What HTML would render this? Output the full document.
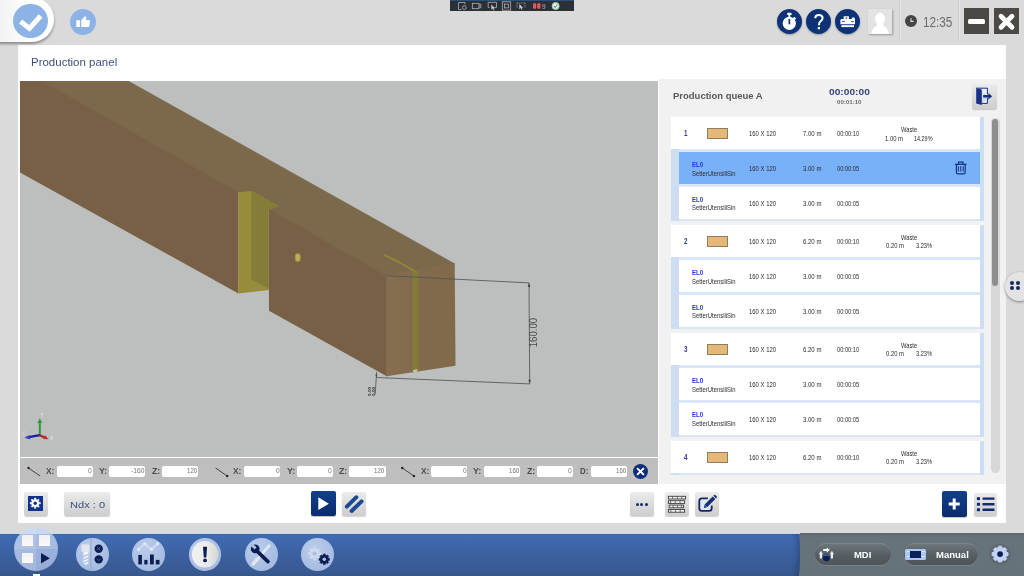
<!DOCTYPE html><html><head><meta charset="utf-8"><title>Production panel</title><style>
html,body{margin:0;padding:0}
html{background:#dadada;overflow:hidden}
body{width:1024px;height:576px;overflow:hidden;background:#dadada;font-family:"Liberation Sans",sans-serif;position:relative}
#clip{position:absolute;left:0;top:0;width:1024px;height:576px;overflow:hidden}
#w{position:absolute;left:0;top:0;width:1024px;height:576px;will-change:transform;filter:blur(.45px)}
.a{position:absolute}
.t{position:absolute;white-space:pre;line-height:1;transform-origin:0 50%;display:block}
.btn{position:absolute;background:linear-gradient(#ebebeb,#cdcdcd);border-radius:2px;box-shadow:0 1px 1px rgba(0,0,0,.18)}
.nbtn{position:absolute;background:linear-gradient(#11408a,#0b2c6c);border-radius:2px;box-shadow:0 1px 1px rgba(0,0,0,.25)}
.inp{position:absolute;top:465.7px;height:11px;width:36.3px;background:#fff;border-radius:2px}
.row{position:absolute;background:#fff}
.circ{position:absolute;border-radius:50%}
svg{position:absolute;overflow:visible}
</style></head><body><div id="clip"><div id="w"><div class="a" style="left:18.2px;top:44.7px;width:988px;height:478.1px;background:#fff"></div>
<div class="a" style="left:-30px;top:-3px;width:83.6px;height:45.2px;border-radius:23px;background:linear-gradient(90deg,#f2f2f2 30px,#fff 60px);box-shadow:0 2px 3px rgba(0,0,0,.38)"></div>
<div class="circ" style="left:13.4px;top:3.6px;width:34.8px;height:34.8px;background:#8db3e6"></div>
<svg style="left:14px;top:4px" width="34" height="34" viewBox="14 4 34 34"><path d="M20.6 21.6 L29.4 28.4 L40.6 16" fill="none" stroke="#fff" stroke-width="5"/></svg>
<div class="circ" style="left:69.9px;top:8.8px;width:26.4px;height:26.4px;background:#8db3e6"></div>
<svg style="left:70px;top:8px" width="26" height="26" viewBox="70 8 26 26"><rect x="76.3" y="20.2" width="3.6" height="6.8" fill="#fff"/><path d="M81.2 27 V20.3 L84.6 16.4 Q86.6 16 86.3 18.2 L85.8 20 H89.2 Q90.2 20.2 90 21.2 L89.2 26.2 Q89 27 88.2 27 Z" fill="#fff"/></svg>
<div class="a" style="left:449.6px;top:-10px;width:124.4px;height:21.3px;background:#2b2f36;border-top:11px solid #28507f;box-sizing:border-box"></div><svg style="left:449px;top:0" width="126" height="12" viewBox="449 0 126 12" fill="none" stroke="#b9b9b9" stroke-width="0.75"><path d="M458.5 2.5h6.5M458.5 2.5v7h3M465 2.5v2"/><circle cx="464.3" cy="7.6" r="1.9"/><rect x="472.3" y="3.3" width="6.6" height="5.4"/><path d="M479 5l1.8-.9v3.8L479 7"/><path d="M489.5 7.5h-1.3v-5.2h8.3v5.2h-1.8"/><path d="M491.3 4.5v5.3l1.4-1.3 1 2 .8-.4-1-1.9h1.7z" fill="#c8c8c8" stroke="none"/><rect x="502.3" y="1.8" width="8.4" height="8.4"/><rect x="504.6" y="4.1" width="3.8" height="3.8"/><path d="M517 3h8M517 3v5M525 3v5" stroke-dasharray="1.2 1"/><path d="M519.3 4v5.3l1.4-1.3 1 2 .8-.4-1-1.9h1.7z" fill="#c8c8c8" stroke="none"/><rect x="533" y="3.2" width="3.2" height="5.6" rx="1" fill="#e25a5a" stroke="none"/><rect x="537.2" y="3.2" width="3.2" height="5.6" rx="1" fill="#e25a5a" stroke="none"/><circle cx="555.6" cy="6" r="3.6" fill="#dfeee0" stroke="#8fc79a" stroke-width="0.8"/><path d="M553.8 6l1.3 1.5 2.3-3" stroke="#3d9a57" stroke-width="1"/></svg><span class="t" style="left:541.60px;top:4px;font-size:6.5px;color:#b8b8b8;transform:scaleX(0.9931);">9</span><div class="circ" style="left:776.8px;top:8.8px;width:25px;height:25px;background:#0e3278;box-shadow:0 1px 2px rgba(0,0,0,.3)"></div><div class="circ" style="left:806.4px;top:8.8px;width:25px;height:25px;background:#0e3278;box-shadow:0 1px 2px rgba(0,0,0,.3)"></div><div class="circ" style="left:834.8px;top:8.8px;width:25px;height:25px;background:#0e3278;box-shadow:0 1px 2px rgba(0,0,0,.3)"></div><svg style="left:770px;top:0" width="100" height="42" viewBox="770 0 100 42"><circle cx="789.3" cy="23.3" r="6.6" fill="#fff"/><rect x="787.2" y="12.8" width="4.4" height="2.3" rx=".6" fill="#fff"/><rect x="788.4" y="14.5" width="1.9" height="3" fill="#fff"/><path d="M793.6 17.6l1.9 1.7" stroke="#fff" stroke-width="2"/><rect x="788.5" y="19" width="1.7" height="5.3" fill="#0e3278"/><path d="M815.2 18.2 Q815.3 14.9 818.9 14.9 Q822.6 14.9 822.6 18 Q822.6 19.8 820.6 21.3 Q818.9 22.6 818.9 25.2" fill="none" stroke="#fff" stroke-width="2"/><rect x="817.8" y="27" width="2.2" height="2.3" fill="#fff"/><path d="M840.4 24.2 V20.2 Q840.4 19 841.6 19 H843.7 V16.2 H848.9 V19 H851.8 V17.6 H854.4 L855 19.6 V24.2 Z" fill="#fff"/><rect x="841.4" y="25.2" width="12.6" height="1.9" fill="#fff"/><path d="M842 21.6h3M851 21.6h3" stroke="#0e3278" stroke-width=".8"/><rect x="845.6" y="17.4" width="1.6" height="1.2" fill="#0e3278"/></svg><div class="a" style="left:867.8px;top:9px;width:24.6px;height:24.8px;background:#e3e3e3;box-shadow:1px 1px 2px rgba(0,0,0,.3)"></div><svg style="left:868px;top:9px" width="25" height="25" viewBox="868 9 25 25"><ellipse cx="880.1" cy="18.6" rx="5.1" ry="5.6" fill="#fff"/><path d="M871.2 33.8 Q872.4 27.4 877.2 25.6 L876.4 21 H883.8 L883 25.6 Q887.8 27.4 889 33.8 Z" fill="#fff"/></svg><div class="a" style="left:899px;top:0;width:1px;height:40px;background:#cdcdcd"></div><div class="a" style="left:900px;top:0;width:1px;height:40px;background:#e6e6e6"></div><div class="a" style="left:958px;top:0;width:1px;height:40px;background:#cdcdcd"></div><div class="a" style="left:959px;top:0;width:1px;height:40px;background:#e6e6e6"></div><div class="circ" style="left:905px;top:15px;width:12px;height:12px;background:#444"></div><svg style="left:905px;top:15px" width="12" height="12" viewBox="0 0 12 12"><path d="M6 3.2V6.4H8.6" fill="none" stroke="#ddd" stroke-width="1.1"/></svg><span class="t" style="left:923.00px;top:15px;font-size:14px;color:#6a6a6a;transform:scaleX(0.8389);">12:35</span><div class="a" style="left:964px;top:8.4px;width:24.8px;height:25.3px;background:#4b4946"></div><div class="a" style="left:968.2px;top:19.2px;width:16.6px;height:4.6px;border-radius:1.5px;background:#fff"></div><div class="a" style="left:994px;top:8.4px;width:24.8px;height:25.3px;background:#4b4946"></div><svg style="left:994px;top:8.6px" width="25" height="25" viewBox="0 0 25 25"><path d="M7 7.2L18 18.2M18 7.2L7 18.2" stroke="#fff" stroke-width="4.8" stroke-linecap="round"/></svg><span class="t" style="left:31.00px;top:58px;font-size:10.4px;color:#3b4f80;transform:scale(1.1051,0.9890);">Production panel</span><div class="a" style="left:20px;top:80.5px;width:637.5px;height:376px;background:#bdbfbe"></div><svg style="left:20px;top:80.5px;overflow:hidden" width="637.5" height="376" viewBox="20 80.5 637.5 376"><defs><linearGradient id="ge" x1="0" x2="1" y1="0" y2="0"><stop offset="0" stop-color="#866f50"/><stop offset=".3" stop-color="#836c4d"/><stop offset=".5" stop-color="#826b4c"/><stop offset="1" stop-color="#816a4a"/></linearGradient><linearGradient id="gf" x1="0" x2="1" y1="0" y2="0"><stop offset="0" stop-color="#775f46"/><stop offset="1" stop-color="#7b6348"/></linearGradient></defs><polygon points="42,80.5 128,80.5 454.7,263.4 386.4,275.2" fill="#7c684b" stroke="#7c684b" stroke-width=".8"/><polygon points="20,80.5 42,80.5 238.4,191.7 238.4,293 20,172" fill="#786046"/><path d="M42,80.5L238.4,191.7" stroke="#7b644a" stroke-width="1.2"/><polygon points="238.4,191.7 251.4,190.6 279,205.6 268.4,209 268.8,289.6 238.4,293" fill="#968c3b"/><polygon points="251.4,190.6 279,205.6 268.4,209 268.6,288.2 251.4,279" fill="#857d37"/><polygon points="268.6,208.6 386.4,275.2 386.7,375.8 269,310.2" fill="#786046"/><path d="M268.6,208.6L386.4,275.2" stroke="#7b644a" stroke-width="1.2"/><polygon points="386.4,275.2 454.7,263.4 455.5,365.2 386.7,375.8" fill="url(#ge)"/><path d="M386.4,275.2L454.7,263.4" stroke="#826c4d" stroke-width="1.2"/><path d="M386.5,275.2L386.7,375.8" stroke="#816a4b" stroke-width="1"/><polygon points="412.4,270.8 418.4,269.7 418.4,370.9 412.4,371.9" fill="#837c38"/><polygon points="413.2,371.8 417.4,371.1 417.4,368.8 413.2,369.6" fill="#c9c9a6"/><path d="M384,254.4 L398.7,261.5 L410.4,268.2 L415.6,271.4" fill="none" stroke="#8f8639" stroke-width="2" stroke-linejoin="round"/><ellipse cx="297.8" cy="257.2" rx="3.1" ry="4.6" fill="#9c8e40"/><ellipse cx="297.7" cy="257" rx="2.1" ry="3.5" fill="#bfae58"/><g stroke="#4c5757" stroke-width="0.85" fill="none"><path d="M386.4,275.2 L529,282.4"/><path d="M376.4,377 L529.7,383.4"/><path d="M529,282.4 L529.7,383.4"/><path d="M376.6,371.6 L375.2,394"/></g><path d="M529,282.4l-1.3,4.2h2.6z M529.7,383.4l-1.4,-4.2h2.6z M376.45,377l-1.2,-3h2.3z" fill="#3f4a4a"/><g transform="translate(536.8,346.8) rotate(-90)"><text x="0" y="0" font-family="Liberation Sans, sans-serif" font-size="10.4" fill="#4a4a4a" textLength="29.4" lengthAdjust="spacingAndGlyphs">160.00</text></g><g transform="translate(374.6,395.4) rotate(-90)"><text x="0" y="0" font-family="Liberation Sans, sans-serif" font-size="4.2" font-weight="bold" fill="#222" textLength="9" lengthAdjust="spacingAndGlyphs">0.00</text><text x="0" y="-3.8" font-family="Liberation Sans, sans-serif" font-size="4.2" font-weight="bold" fill="#222" textLength="9" lengthAdjust="spacingAndGlyphs">0.00</text></g><path d="M39.8,434.7 L39.8,422" stroke="#2e9a3a" stroke-width="2"/><path d="M39.8,417.6l-2.3,5h4.6z" fill="#2e9a3a"/><path d="M39.8,434.7 L29,436.6" stroke="#1c1c9c" stroke-width="2.2"/><path d="M24.4,437.3l5.2,-2.8 .6,4.4z" fill="#3a3ad0"/><path d="M39.8,434.7 L45,437.2" stroke="#b02222" stroke-width="2.2"/><path d="M48.4,438.8l-5.2,-.2 2,-3.8z" fill="#c42a2a"/><text x="40.4" y="416" font-family="Liberation Sans, sans-serif" font-size="5" fill="#e8e8e8">Y</text><text x="50" y="439" font-family="Liberation Sans, sans-serif" font-size="5" fill="#e8e8e8">X</text><text x="22.5" y="434.5" font-family="Liberation Sans, sans-serif" font-size="4.5" fill="#d8d8b8">Z</text></svg><div class="a" style="left:20px;top:458.3px;width:637.5px;height:25.3px;background:#bebebe"></div><svg style="left:0;top:458px" width="660" height="26" viewBox="0 458 660 26"><path d="M28.5 468.0L40.1 476.0" stroke="#333" stroke-width=".9"/><circle cx="28.5" cy="468.0" r="1.2" fill="#222"/><path d="M215.6 468.0L227.2 476.0" stroke="#333" stroke-width=".9"/><circle cx="227.2" cy="476.0" r="1.2" fill="#222"/><path d="M402.3 468.0L413.9 476.0" stroke="#333" stroke-width=".9"/><circle cx="402.3" cy="468.0" r="1.2" fill="#222"/><circle cx="413.9" cy="476.0" r="1.2" fill="#222"/></svg><span class="t" style="left:45.90px;top:467px;font-size:8.4px;font-weight:700;color:#4c4c4c;transform:scaleX(0.9910);">X:</span><div class="inp" style="left:56.6px"></div><span class="t" style="left:88.10px;top:467px;font-size:7px;color:#747474;transform:scaleX(0.9472);">0</span><span class="t" style="left:99.00px;top:467px;font-size:8.4px;font-weight:700;color:#4c4c4c;transform:scaleX(1.0688);">Y:</span><div class="inp" style="left:109.2px"></div><span class="t" style="left:131.00px;top:467px;font-size:7px;color:#747474;transform:scaleX(0.9561);">-160</span><span class="t" style="left:151.70px;top:467px;font-size:8.4px;font-weight:700;color:#4c4c4c;transform:scaleX(1.0498);">Z:</span><div class="inp" style="left:162.0px"></div><span class="t" style="left:186.90px;top:467px;font-size:7px;color:#747474;transform:scaleX(0.8813);">120</span><span class="t" style="left:233.20px;top:467px;font-size:8.4px;font-weight:700;color:#4c4c4c;transform:scaleX(0.9910);">X:</span><div class="inp" style="left:244.0px"></div><span class="t" style="left:275.50px;top:467px;font-size:7px;color:#747474;transform:scaleX(0.9472);">0</span><span class="t" style="left:286.50px;top:467px;font-size:8.4px;font-weight:700;color:#4c4c4c;transform:scaleX(1.0688);">Y:</span><div class="inp" style="left:296.7px"></div><span class="t" style="left:328.20px;top:467px;font-size:7px;color:#747474;transform:scaleX(0.9472);">0</span><span class="t" style="left:339.00px;top:467px;font-size:8.4px;font-weight:700;color:#4c4c4c;transform:scaleX(1.0498);">Z:</span><div class="inp" style="left:349.4px"></div><span class="t" style="left:374.30px;top:467px;font-size:7px;color:#747474;transform:scaleX(0.8813);">120</span><span class="t" style="left:420.60px;top:467px;font-size:8.4px;font-weight:700;color:#4c4c4c;transform:scaleX(0.9910);">X:</span><div class="inp" style="left:431.0px"></div><span class="t" style="left:462.50px;top:467px;font-size:7px;color:#747474;transform:scaleX(0.9472);">0</span><span class="t" style="left:473.40px;top:467px;font-size:8.4px;font-weight:700;color:#4c4c4c;transform:scaleX(1.0688);">Y:</span><div class="inp" style="left:483.8px"></div><span class="t" style="left:508.70px;top:467px;font-size:7px;color:#747474;transform:scaleX(0.8813);">160</span><span class="t" style="left:526.70px;top:467px;font-size:8.4px;font-weight:700;color:#4c4c4c;transform:scaleX(1.0498);">Z:</span><div class="inp" style="left:536.8px"></div><span class="t" style="left:568.30px;top:467px;font-size:7px;color:#747474;transform:scaleX(0.9472);">0</span><span class="t" style="left:579.50px;top:467px;font-size:8.4px;font-weight:700;color:#4c4c4c;transform:scaleX(0.9385);">D:</span><div class="inp" style="left:591.0px"></div><span class="t" style="left:615.90px;top:467px;font-size:7px;color:#747474;transform:scaleX(0.8813);">160</span><div class="circ" style="left:633.2px;top:463.6px;width:15px;height:15px;background:#0c2f78"></div><svg style="left:633.2px;top:463.6px" width="15" height="15" viewBox="0 0 15 15"><path d="M4.1 4.1L10.9 10.9M10.9 4.1L4.1 10.9" stroke="#fff" stroke-width="2"/></svg><div class="a" style="left:658.8px;top:79.4px;width:347.4px;height:404.6px;background:#f1f1f1"></div><span class="t" style="left:672.50px;top:91px;font-size:9.6px;font-weight:700;color:#585858;transform:scale(0.9879,0.9821);">Production queue A</span><span class="t" style="left:828.70px;top:87px;font-size:9.6px;font-weight:700;color:#35457f;transform:scale(1.0623,1.0119);">00:00:00</span><span class="t" style="left:836.70px;top:99px;font-size:6.2px;font-weight:700;color:#6c6c6c;transform:scale(0.9887,0.9908);">00:01:10</span><div class="btn" style="left:972px;top:84px;width:25px;height:24.5px"></div><svg style="left:972px;top:84px" width="25" height="25" viewBox="972 84 25 25"><path d="M976.2 88.2H987.4V94.4M987.4 98V103.4H981.6" fill="#e8f0fb" stroke="#18307a" stroke-width="1"/><path d="M976.2 88.2L981.8 89.6V105L976.2 103.4Z" fill="#13308a"/><path d="M983.2 95H988.4V93L992.2 96.2L988.4 99.4V97.4H983.2Z" fill="#13308a"/></svg><div class="a" style="left:660px;top:112px;width:330px;height:362.6px;overflow:hidden"><div class="a" style="left:10.6px;top:37.2px;width:8.3px;height:71.6px;background:#cddef3"></div><div class="a" style="left:319.8px;top:5.4px;width:4.2px;height:103.4px;background:#cddef3"></div><div class="a" style="left:18.9px;top:37.2px;width:301px;height:71.6px;background:#d8e6f7"></div><div class="row" style="left:10.6px;top:5.4px;width:309.2px;height:31.5px"></div><div class="a" style="left:47.1px;top:15.8px;width:18.8px;height:9px;background:#e6b877;border:1px solid #8f7d62"></div><span class="t" style="left:23.70px;top:18px;font-size:8.2px;font-weight:700;color:#3038b4;transform:scaleX(0.7671);">1</span><span class="t" style="left:88.70px;top:18px;font-size:7.6px;color:#2a2a2a;transform:scaleX(0.7827);">160 X 120</span><span class="t" style="left:142.60px;top:18px;font-size:7.6px;color:#2a2a2a;transform:scaleX(0.7925);">7.00 m</span><span class="t" style="left:177.00px;top:18px;font-size:7.6px;color:#2a2a2a;transform:scaleX(0.7510);">00:00:10</span><span class="t" style="left:240.80px;top:14px;font-size:7.4px;color:#2a2a2a;transform:scaleX(0.7837);">Waste</span><span class="t" style="left:225.00px;top:23px;font-size:7.6px;color:#2a2a2a;transform:scaleX(0.7752);">1.00 m</span><span class="t" style="left:254.30px;top:23px;font-size:7.6px;color:#2a2a2a;transform:scaleX(0.7180);">14.29%</span><div class="row" style="left:18.9px;top:39.9px;width:300.9px;height:32px;background:#78b1f9"></div><span class="t" style="left:32.00px;top:49px;font-size:7.8px;font-weight:700;color:#2a32dc;transform:scaleX(0.7825);">EL0</span><span class="t" style="left:32.00px;top:58px;font-size:7px;color:#2e2e2e;transform:scaleX(0.8425);">SetterUtensiliSin</span><span class="t" style="left:88.70px;top:53px;font-size:7.6px;color:#2a2a2a;transform:scaleX(0.7827);">160 X 120</span><span class="t" style="left:142.60px;top:53px;font-size:7.6px;color:#2a2a2a;transform:scaleX(0.7925);">3.00 m</span><span class="t" style="left:177.00px;top:53px;font-size:7.6px;color:#2a2a2a;transform:scaleX(0.7510);">00:00:05</span><svg style="left:294px;top:48.0px" width="14" height="16" viewBox="954 160 14 16" fill="none" stroke="#14337e" stroke-width="1.2"><path d="M955 164.4H966.6M958.5 164.2V162.2H963V164.2M956.4 164.6V172.6Q956.4 173.8 957.6 173.8H964Q965.2 173.8 965.2 172.6V164.6"/><path d="M958.4 166.2V171.6M960.8 166.2V171.6M963.2 166.2V171.6" stroke-width="1"/></svg><div class="row" style="left:18.9px;top:74.6px;width:300.9px;height:32px;background:#fff"></div><span class="t" style="left:32.00px;top:84px;font-size:7.8px;font-weight:700;color:#2a32dc;transform:scaleX(0.7825);">EL0</span><span class="t" style="left:32.00px;top:92px;font-size:7px;color:#2e2e2e;transform:scaleX(0.8425);">SetterUtensiliSin</span><span class="t" style="left:88.70px;top:88px;font-size:7.6px;color:#2a2a2a;transform:scaleX(0.7827);">160 X 120</span><span class="t" style="left:142.60px;top:88px;font-size:7.6px;color:#2a2a2a;transform:scaleX(0.7925);">3.00 m</span><span class="t" style="left:177.00px;top:88px;font-size:7.6px;color:#2a2a2a;transform:scaleX(0.7510);">00:00:05</span><div class="a" style="left:10.6px;top:145.2px;width:8.3px;height:71.6px;background:#cddef3"></div><div class="a" style="left:319.8px;top:113.4px;width:4.2px;height:103.4px;background:#cddef3"></div><div class="a" style="left:18.9px;top:145.2px;width:301px;height:71.6px;background:#d8e6f7"></div><div class="row" style="left:10.6px;top:113.4px;width:309.2px;height:31.5px"></div><div class="a" style="left:47.1px;top:123.8px;width:18.8px;height:9px;background:#e6b877;border:1px solid #8f7d62"></div><span class="t" style="left:23.70px;top:126px;font-size:8.2px;font-weight:700;color:#3038b4;transform:scaleX(0.7671);">2</span><span class="t" style="left:88.70px;top:126px;font-size:7.6px;color:#2a2a2a;transform:scaleX(0.7827);">160 X 120</span><span class="t" style="left:142.60px;top:126px;font-size:7.6px;color:#2a2a2a;transform:scaleX(0.7925);">6.20 m</span><span class="t" style="left:177.00px;top:126px;font-size:7.6px;color:#2a2a2a;transform:scaleX(0.7510);">00:00:10</span><span class="t" style="left:240.80px;top:122px;font-size:7.4px;color:#2a2a2a;transform:scaleX(0.7837);">Waste</span><span class="t" style="left:226.00px;top:130px;font-size:7.6px;color:#2a2a2a;transform:scaleX(0.7752);">0.20 m</span><span class="t" style="left:256.00px;top:130px;font-size:7.6px;color:#2a2a2a;transform:scaleX(0.7426);">3.23%</span><div class="row" style="left:18.9px;top:147.9px;width:300.9px;height:32px;background:#fff"></div><span class="t" style="left:32.00px;top:157px;font-size:7.8px;font-weight:700;color:#2a32dc;transform:scaleX(0.7825);">EL0</span><span class="t" style="left:32.00px;top:166px;font-size:7px;color:#2e2e2e;transform:scaleX(0.8425);">SetterUtensiliSin</span><span class="t" style="left:88.70px;top:161px;font-size:7.6px;color:#2a2a2a;transform:scaleX(0.7827);">160 X 120</span><span class="t" style="left:142.60px;top:161px;font-size:7.6px;color:#2a2a2a;transform:scaleX(0.7925);">3.00 m</span><span class="t" style="left:177.00px;top:161px;font-size:7.6px;color:#2a2a2a;transform:scaleX(0.7510);">00:00:05</span><div class="row" style="left:18.9px;top:182.6px;width:300.9px;height:32px;background:#fff"></div><span class="t" style="left:32.00px;top:192px;font-size:7.8px;font-weight:700;color:#2a32dc;transform:scaleX(0.7825);">EL0</span><span class="t" style="left:32.00px;top:200px;font-size:7px;color:#2e2e2e;transform:scaleX(0.8425);">SetterUtensiliSin</span><span class="t" style="left:88.70px;top:196px;font-size:7.6px;color:#2a2a2a;transform:scaleX(0.7827);">160 X 120</span><span class="t" style="left:142.60px;top:196px;font-size:7.6px;color:#2a2a2a;transform:scaleX(0.7925);">3.00 m</span><span class="t" style="left:177.00px;top:196px;font-size:7.6px;color:#2a2a2a;transform:scaleX(0.7510);">00:00:05</span><div class="a" style="left:10.6px;top:253.2px;width:8.3px;height:71.6px;background:#cddef3"></div><div class="a" style="left:319.8px;top:221.4px;width:4.2px;height:103.4px;background:#cddef3"></div><div class="a" style="left:18.9px;top:253.2px;width:301px;height:71.6px;background:#d8e6f7"></div><div class="row" style="left:10.6px;top:221.4px;width:309.2px;height:31.5px"></div><div class="a" style="left:47.1px;top:231.8px;width:18.8px;height:9px;background:#e6b877;border:1px solid #8f7d62"></div><span class="t" style="left:23.70px;top:234px;font-size:8.2px;font-weight:700;color:#3038b4;transform:scaleX(0.7671);">3</span><span class="t" style="left:88.70px;top:234px;font-size:7.6px;color:#2a2a2a;transform:scaleX(0.7827);">160 X 120</span><span class="t" style="left:142.60px;top:234px;font-size:7.6px;color:#2a2a2a;transform:scaleX(0.7925);">6.20 m</span><span class="t" style="left:177.00px;top:234px;font-size:7.6px;color:#2a2a2a;transform:scaleX(0.7510);">00:00:10</span><span class="t" style="left:240.80px;top:230px;font-size:7.4px;color:#2a2a2a;transform:scaleX(0.7837);">Waste</span><span class="t" style="left:226.00px;top:238px;font-size:7.6px;color:#2a2a2a;transform:scaleX(0.7752);">0.20 m</span><span class="t" style="left:256.00px;top:238px;font-size:7.6px;color:#2a2a2a;transform:scaleX(0.7426);">3.23%</span><div class="row" style="left:18.9px;top:255.9px;width:300.9px;height:32px;background:#fff"></div><span class="t" style="left:32.00px;top:265px;font-size:7.8px;font-weight:700;color:#2a32dc;transform:scaleX(0.7825);">EL0</span><span class="t" style="left:32.00px;top:274px;font-size:7px;color:#2e2e2e;transform:scaleX(0.8425);">SetterUtensiliSin</span><span class="t" style="left:88.70px;top:269px;font-size:7.6px;color:#2a2a2a;transform:scaleX(0.7827);">160 X 120</span><span class="t" style="left:142.60px;top:269px;font-size:7.6px;color:#2a2a2a;transform:scaleX(0.7925);">3.00 m</span><span class="t" style="left:177.00px;top:269px;font-size:7.6px;color:#2a2a2a;transform:scaleX(0.7510);">00:00:05</span><div class="row" style="left:18.9px;top:290.6px;width:300.9px;height:32px;background:#fff"></div><span class="t" style="left:32.00px;top:299px;font-size:7.8px;font-weight:700;color:#2a32dc;transform:scaleX(0.7825);">EL0</span><span class="t" style="left:32.00px;top:308px;font-size:7px;color:#2e2e2e;transform:scaleX(0.8425);">SetterUtensiliSin</span><span class="t" style="left:88.70px;top:304px;font-size:7.6px;color:#2a2a2a;transform:scaleX(0.7827);">160 X 120</span><span class="t" style="left:142.60px;top:304px;font-size:7.6px;color:#2a2a2a;transform:scaleX(0.7925);">3.00 m</span><span class="t" style="left:177.00px;top:304px;font-size:7.6px;color:#2a2a2a;transform:scaleX(0.7510);">00:00:05</span><div class="a" style="left:10.6px;top:361.2px;width:8.3px;height:71.6px;background:#cddef3"></div><div class="a" style="left:319.8px;top:329.4px;width:4.2px;height:103.4px;background:#cddef3"></div><div class="a" style="left:18.9px;top:361.2px;width:301px;height:71.6px;background:#d8e6f7"></div><div class="row" style="left:10.6px;top:329.4px;width:309.2px;height:31.5px"></div><div class="a" style="left:47.1px;top:339.8px;width:18.8px;height:9px;background:#e6b877;border:1px solid #8f7d62"></div><span class="t" style="left:23.70px;top:342px;font-size:8.2px;font-weight:700;color:#3038b4;transform:scaleX(0.7671);">4</span><span class="t" style="left:88.70px;top:342px;font-size:7.6px;color:#2a2a2a;transform:scaleX(0.7827);">160 X 120</span><span class="t" style="left:142.60px;top:342px;font-size:7.6px;color:#2a2a2a;transform:scaleX(0.7925);">6.20 m</span><span class="t" style="left:177.00px;top:342px;font-size:7.6px;color:#2a2a2a;transform:scaleX(0.7510);">00:00:10</span><span class="t" style="left:240.80px;top:338px;font-size:7.4px;color:#2a2a2a;transform:scaleX(0.7837);">Waste</span><span class="t" style="left:226.00px;top:346px;font-size:7.6px;color:#2a2a2a;transform:scaleX(0.7752);">0.20 m</span><span class="t" style="left:256.00px;top:346px;font-size:7.6px;color:#2a2a2a;transform:scaleX(0.7426);">3.23%</span><div class="row" style="left:18.9px;top:363.9px;width:300.9px;height:32px;background:#fff"></div><span class="t" style="left:32.00px;top:373px;font-size:7.8px;font-weight:700;color:#2a32dc;transform:scaleX(0.7825);">EL0</span><span class="t" style="left:32.00px;top:382px;font-size:7px;color:#2e2e2e;transform:scaleX(0.8425);">SetterUtensiliSin</span><span class="t" style="left:88.70px;top:377px;font-size:7.6px;color:#2a2a2a;transform:scaleX(0.7827);">160 X 120</span><span class="t" style="left:142.60px;top:377px;font-size:7.6px;color:#2a2a2a;transform:scaleX(0.7925);">3.00 m</span><span class="t" style="left:177.00px;top:377px;font-size:7.6px;color:#2a2a2a;transform:scaleX(0.7510);">00:00:05</span><div class="row" style="left:18.9px;top:398.6px;width:300.9px;height:32px;background:#fff"></div><span class="t" style="left:32.00px;top:407px;font-size:7.8px;font-weight:700;color:#2a32dc;transform:scaleX(0.7825);">EL0</span><span class="t" style="left:32.00px;top:416px;font-size:7px;color:#2e2e2e;transform:scaleX(0.8425);">SetterUtensiliSin</span><span class="t" style="left:88.70px;top:412px;font-size:7.6px;color:#2a2a2a;transform:scaleX(0.7827);">160 X 120</span><span class="t" style="left:142.60px;top:412px;font-size:7.6px;color:#2a2a2a;transform:scaleX(0.7925);">3.00 m</span><span class="t" style="left:177.00px;top:412px;font-size:7.6px;color:#2a2a2a;transform:scaleX(0.7510);">00:00:05</span></div><div class="a" style="left:990.6px;top:117.6px;width:9.4px;height:355.6px;border-radius:4.7px;background:#d7d7d7"></div><div class="a" style="left:992.2px;top:118.6px;width:5.9px;height:167.4px;border-radius:3px;background:#8e8e8e"></div><div class="btn" style="left:23.8px;top:491.8px;width:24.2px;height:24.7px"></div><div class="a" style="left:28.1px;top:496.2px;width:14.8px;height:14.8px;background:#10308a"></div><svg style="left:29.30px;top:497.40px" width="12.40" height="12.40" viewBox="29.30 497.40 12.40 12.40"><path d="M39.04 502.92L40.66 502.96L40.66 504.24L39.04 504.28L38.48 505.62L39.60 506.80L38.70 507.70L37.52 506.58L36.18 507.14L36.14 508.76L34.86 508.76L34.82 507.14L33.48 506.58L32.30 507.70L31.40 506.80L32.52 505.62L31.96 504.28L30.34 504.24L30.34 502.96L31.96 502.92L32.52 501.58L31.40 500.40L32.30 499.50L33.48 500.62L34.82 500.06L34.86 498.44L36.14 498.44L36.18 500.06L37.52 500.62L38.70 499.50L39.60 500.40L38.48 501.58Z" fill="#fff" stroke="#fff" stroke-width="0.62" stroke-linejoin="round"/><circle cx="35.50" cy="503.60" r="3.60" fill="#fff"/><circle cx="35.50" cy="503.60" r="1.70" fill="#10308a"/></svg><div class="btn" style="left:63.8px;top:491.8px;width:45.8px;height:24.7px"></div><span class="t" style="left:69.50px;top:500px;font-size:10px;color:#3b4f80;transform:scale(1.1077,0.9714);">Ndx : 0</span><div class="nbtn" style="left:311.3px;top:491.3px;width:24.7px;height:25px"></div><svg style="left:311.3px;top:491.3px" width="25" height="25" viewBox="311.3 491.3 25 25"><path d="M318.6 497.6L329.2 504L318.6 510.4Z" fill="#fff"/></svg><div class="btn" style="left:341.6px;top:491.8px;width:24.4px;height:24.7px"></div><svg style="left:341.6px;top:491.8px" width="25" height="25" viewBox="341.6 491.8 25 25"><path d="M346.4 506.4L356 497M351.2 510.8L361.2 501.2" stroke="#1b4a94" stroke-width="3.9" stroke-linecap="round"/></svg><div class="btn" style="left:629.5px;top:491.8px;width:24.4px;height:24.7px"></div><div class="circ" style="left:635.8px;top:502.5px;width:3px;height:3px;background:#15296a"></div><div class="circ" style="left:640.4px;top:502.5px;width:3px;height:3px;background:#15296a"></div><div class="circ" style="left:645.0px;top:502.5px;width:3px;height:3px;background:#15296a"></div><div class="btn" style="left:665px;top:491.8px;width:24px;height:24.7px"></div><svg style="left:665px;top:491.8px" width="24" height="25" viewBox="665 491.8 24 25"><rect x="668.4" y="496.1" width="17.2" height="2.7" fill="#f3f3f3" stroke="#3c3c3c" stroke-width=".9"/><path d="M672.6 496.1V498.8" stroke="#555" stroke-width=".8"/><path d="M677.4 496.1V498.8" stroke="#555" stroke-width=".8"/><path d="M681.8 496.1V498.8" stroke="#555" stroke-width=".8"/><rect x="668.4" y="500.5" width="16.2" height="2.7" fill="#f3f3f3" stroke="#3c3c3c" stroke-width=".9"/><path d="M670.6 500.5V503.2" stroke="#555" stroke-width=".8"/><path d="M675.2 500.5V503.2" stroke="#555" stroke-width=".8"/><path d="M680.0 500.5V503.2" stroke="#555" stroke-width=".8"/><rect x="669.2" y="504.9" width="14.4" height="2.7" fill="#f3f3f3" stroke="#3c3c3c" stroke-width=".9"/><path d="M673.0 504.9V507.6" stroke="#555" stroke-width=".8"/><path d="M677.6 504.9V507.6" stroke="#555" stroke-width=".8"/><path d="M681.4 504.9V507.6" stroke="#555" stroke-width=".8"/><rect x="668.4" y="509.3" width="16.2" height="2.7" fill="#f3f3f3" stroke="#3c3c3c" stroke-width=".9"/><path d="M670.8 509.3V512.0" stroke="#555" stroke-width=".8"/><path d="M675.6 509.3V512.0" stroke="#555" stroke-width=".8"/><path d="M680.2 509.3V512.0" stroke="#555" stroke-width=".8"/></svg><div class="btn" style="left:694.5px;top:491.8px;width:24.5px;height:24.7px"></div><svg style="left:694.5px;top:491.8px" width="25" height="25" viewBox="694.5 491.8 25 25"><rect x="698.8" y="498.2" width="12.4" height="12.4" rx="2.6" fill="#e2e9f6"/><path d="M707.4 498.2H701.4Q698.8 498.2 698.8 500.8V508Q698.8 510.6 701.4 510.6H708.6Q711.2 510.6 711.2 508V505.4" fill="none" stroke="#14285e" stroke-width="1.8"/><path d="M703.2 508L704.2 504.2L712.2 496.2L714.9 498.9L706.9 506.9Z" fill="#14306e"/><path d="M712.9 495.5L713.6 494.9Q714.4 494.4 715.1 495L716.1 496Q716.7 496.8 716.1 497.6L715.5 498.2Z" fill="#14306e"/><path d="M704.6 505.2L706 506.6" stroke="#dfe6f4" stroke-width=".7"/></svg><div class="nbtn" style="left:942.3px;top:491.2px;width:24.7px;height:25.4px"></div><svg style="left:942.3px;top:491.2px" width="25" height="26" viewBox="942.3 491.2 25 26"><path d="M949 504.3H960M954.5 498.8V509.8" stroke="#fff" stroke-width="3"/></svg><div class="btn" style="left:973.5px;top:492.6px;width:23.2px;height:23px"></div><svg style="left:973.5px;top:492.6px" width="24" height="23" viewBox="973.5 492.6 24 23"><rect x="976.4" y="496.8" width="3.1" height="2.9" fill="#15296e"/><rect x="982" y="497.1" width="12" height="2.3" rx=".5" fill="#15296e"/><rect x="976.4" y="502.4" width="3.1" height="2.9" fill="#15296e"/><rect x="982" y="502.7" width="12" height="2.3" rx=".5" fill="#15296e"/><rect x="976.4" y="507.9" width="3.1" height="2.9" fill="#15296e"/><rect x="982" y="508.2" width="12" height="2.3" rx=".5" fill="#15296e"/></svg><div class="a" style="left:-20px;top:533px;width:1064px;height:63px;background:linear-gradient(#5e686e,#67737a 5px,#66727a 43px)"></div><div class="a" style="left:-40px;top:575px;width:839px;height:22px;background:#38588c"></div><div class="a" style="left:-40px;top:533px;width:840.4px;height:43px;border-radius:0 1.6px 1.6px 0/0 21px 21px 0;box-shadow:inset -6px 0 6px -4px rgba(0,0,40,.25);background:linear-gradient(#325a9e,#406bb3 2px,#3c62a3 19px,#38588c 43px)"></div><div class="a" style="left:-20px;top:532.5px;width:820px;height:1px;background:#c9dcef"></div><div class="circ" style="left:14px;top:526.8px;width:44.2px;height:44.2px;background:rgba(196,214,244,.77);overflow:hidden"><div class="a" style="left:0;top:0;width:22px;height:22px;background:rgba(255,255,255,.1)"></div><div class="a" style="left:22px;top:22px;width:23px;height:23px;background:rgba(20,40,120,.07)"></div></div><div class="a" style="left:21.9px;top:535.4px;width:10.8px;height:10.6px;background:linear-gradient(#f3efef,#fafafa)"></div><div class="a" style="left:39.2px;top:535.4px;width:10.8px;height:10.6px;background:linear-gradient(#f3efef,#fafafa)"></div><div class="a" style="left:21.9px;top:552.9px;width:10.8px;height:10.6px;background:linear-gradient(#f3efef,#fafafa)"></div><svg style="left:40px;top:552px" width="12" height="13" viewBox="40 552 12 13"><path d="M41 552.9L49.9 558.2L41 563.5Z" fill="#0b1f52"/></svg><div class="a" style="left:32.5px;top:573.8px;width:7.5px;height:12px;background:#fff"></div><div class="circ" style="left:76.1px;top:537.9px;width:32.8px;height:32.8px;background:radial-gradient(circle at 38% 30%,#bbccea,#a4bbe2 75%)"></div><div class="circ" style="left:132.2px;top:537.9px;width:32.8px;height:32.8px;background:radial-gradient(circle at 38% 30%,#bbccea,#a4bbe2 75%)"></div><div class="circ" style="left:188.6px;top:537.9px;width:32.8px;height:32.8px;background:radial-gradient(circle at 38% 30%,#bbccea,#a4bbe2 75%)"></div><div class="circ" style="left:245.1px;top:537.9px;width:32.8px;height:32.8px;background:radial-gradient(circle at 38% 30%,#bbccea,#a4bbe2 75%)"></div><div class="circ" style="left:301.4px;top:537.9px;width:32.8px;height:32.8px;background:radial-gradient(circle at 38% 30%,#bbccea,#a4bbe2 75%)"></div><svg style="left:70px;top:533px" width="270" height="43" viewBox="70 533 270 43"><rect x="92" y="538.2" width="16" height="32" fill="#b4c8ea" opacity=".0"/><path d="M91 538.4V570" stroke="#97acd3" stroke-width="1.3"/><rect x="81.4" y="544.4" width="8" height="7.4" fill="#e3e5ee"/><path d="M83.5 551.8H88.3V563.4L85.9 564.8L83.5 563.4Z" fill="#f2f4f9"/><path d="M83.3 556.6L88.5 554.2M83.3 560L88.5 557.6M83.3 563.2L88.5 560.8" stroke="#a9c0e6" stroke-width="1.2"/><circle cx="98.7" cy="548.7" r="4.2" fill="#0d1f52"/><circle cx="98.7" cy="559.4" r="4.2" fill="#0d1f52"/><path d="M97.1 547.1L100.3 550.3M100.3 547.1L97.1 550.3" stroke="#4a629c" stroke-width=".9"/><path d="M96.9 558.8L98.7 560.6L100.5 558.8" stroke="#4a629c" stroke-width=".9" fill="none"/><rect x="138.3" y="554.9" width="3.6" height="9.5" fill="#0d1f52"/><rect x="144.3" y="559.9" width="3.2" height="4.5" fill="#0d1f52"/><rect x="150.0" y="554.5" width="3.8" height="9.9" fill="#0d1f52"/><rect x="155.8" y="559.9" width="3.7" height="4.5" fill="#0d1f52"/><path d="M138.6 549.4L144.8 543.8L151.4 549.2L157.6 543.6" fill="none" stroke="#d3dff3" stroke-width="1.5"/><circle cx="138.6" cy="549.4" r="1.6" fill="#e2eaf7"/><circle cx="144.8" cy="543.8" r="1.6" fill="#e2eaf7"/><circle cx="151.4" cy="549.2" r="1.6" fill="#e2eaf7"/><circle cx="157.6" cy="543.6" r="1.6" fill="#e2eaf7"/><defs><linearGradient id="ga" x1="0" x2="1" y1="0" y2="0"><stop offset="0" stop-color="#f1f1f2"/><stop offset=".55" stop-color="#ececec"/><stop offset="1" stop-color="#d6d6d4"/></linearGradient></defs><circle cx="205" cy="554.3" r="13.2" fill="url(#ga)"/><path d="M192 554.3A13 13 0 0 1 218 554.3" fill="none"/><path d="M203 546.8H207.1L206.3 557.5H203.8Z" fill="#0d1f52"/><circle cx="205.05" cy="560.4" r="1.9" fill="#0d1f52"/><path d="M253.4 563.6L269.2 545.6" stroke="#e4e9f2" stroke-width="2.6" stroke-linecap="round"/><path d="M253 564L257.4 559" stroke="#dfe4ee" stroke-width="3.6" stroke-linecap="round"/><path d="M257.6 551.6L268 561.6" stroke="#0d1f52" stroke-width="3.6" stroke-linecap="round"/><circle cx="255.2" cy="548.8" r="4.4" fill="#0d1f52"/><path d="M250.4 543.6L255.6 548.4" stroke="#a9c0e6" stroke-width="2.8"/></svg><svg style="left:307.20px;top:545.80px" width="15.20" height="15.20" viewBox="307.20 545.80 15.20 15.20"><path d="M319.51 552.50L321.35 552.59L321.35 554.21L319.51 554.30L318.77 556.09L320.01 557.46L318.86 558.61L317.49 557.37L315.70 558.11L315.61 559.95L313.99 559.95L313.90 558.11L312.11 557.37L310.74 558.61L309.59 557.46L310.83 556.09L310.09 554.30L308.25 554.21L308.25 552.59L310.09 552.50L310.83 550.71L309.59 549.34L310.74 548.19L312.11 549.43L313.90 548.69L313.99 546.85L315.61 546.85L315.70 548.69L317.49 549.43L318.86 548.19L320.01 549.34L318.77 550.71Z" fill="#d0d9ec" stroke="#d0d9ec" stroke-width="0.79" stroke-linejoin="round"/><circle cx="314.80" cy="553.40" r="4.80" fill="#d0d9ec"/><circle cx="314.80" cy="553.40" r="2.20" fill="#a9c0e6"/></svg><svg style="left:317.70px;top:552.70px" width="12.60" height="12.60" viewBox="317.70 552.70 12.60 12.60"><path d="M327.95 557.90L329.22 558.07L329.22 559.93L327.95 560.10L327.57 561.02L328.35 562.03L327.03 563.35L326.02 562.57L325.10 562.95L324.93 564.22L323.07 564.22L322.90 562.95L321.98 562.57L320.97 563.35L319.65 562.03L320.43 561.02L320.05 560.10L318.78 559.93L318.78 558.07L320.05 557.90L320.43 556.98L319.65 555.97L320.97 554.65L321.98 555.43L322.90 555.05L323.07 553.78L324.93 553.78L325.10 555.05L326.02 555.43L327.03 554.65L328.35 555.97L327.57 556.98Z" fill="#0d1f52" stroke="#0d1f52" stroke-width="0.64" stroke-linejoin="round"/><circle cx="324.00" cy="559.00" r="4.10" fill="#0d1f52"/><circle cx="324.00" cy="559.00" r="1.80" fill="#a9c0e6"/></svg><div class="a" style="left:814.7px;top:542.7px;width:76.6px;height:22.8px;border-radius:11.4px;background:linear-gradient(#6f787c,#565e62 55%,#4e5558);box-shadow:0 1px 0 rgba(255,255,255,.12),inset 0 1px 1px rgba(255,255,255,.12)"></div><div class="a" style="left:903.5px;top:542.7px;width:74.4px;height:22.8px;border-radius:11.4px;background:linear-gradient(#6f787c,#565e62 55%,#4e5558);box-shadow:0 1px 0 rgba(255,255,255,.12),inset 0 1px 1px rgba(255,255,255,.12)"></div><span class="t" style="left:854.10px;top:551px;font-size:9.2px;font-weight:700;color:#fff;transform:scaleX(1.0271);">MDI</span><span class="t" style="left:936.00px;top:551px;font-size:9.2px;font-weight:700;color:#fff;transform:scaleX(1.0361);">Manual</span><svg style="left:817px;top:545px" width="18" height="19" viewBox="817 545 18 19"><ellipse cx="826.4" cy="557.6" rx="3.5" ry="3.8" fill="#0d1f52"/><path d="M823.2 556.4Q826.4 554.6 829.6 556.4V555.4Q826.4 553 823.2 555.4Z" fill="#5576b4"/><path d="M823.2 549.1H826.8V547.5L829.8 550L826.8 552.5V550.9H823.2Z" fill="#fff"/><path d="M818.8 554.2L820.9 550.8L823 554.2H822V558.6H819.8V554.2Z M829.8 554.2L831.9 550.8L834 554.2H833V558.6H830.8V554.2Z" fill="#e3ecfc"/></svg><div class="a" style="left:905.4px;top:548.6px;width:20.8px;height:11.6px;border-radius:1.5px;background:#aac6f2"></div><div class="a" style="left:910.4px;top:550.5px;width:10.2px;height:7.6px;background:#0a2058"></div><div class="a" style="left:906.6px;top:551px;width:2.4px;height:1.2px;background:#dce8fb"></div><div class="a" style="left:906.6px;top:555.6px;width:2.4px;height:1.2px;background:#dce8fb"></div><div class="a" style="left:922.4px;top:551px;width:2.4px;height:1.2px;background:#dce8fb"></div><div class="a" style="left:922.4px;top:555.6px;width:2.4px;height:1.2px;background:#dce8fb"></div><div class="circ" style="left:989.2px;top:543.6px;width:21.6px;height:21.6px;background:radial-gradient(#566167 40%,#66727a 100%)"></div><svg style="left:990.90px;top:545.30px" width="18.20" height="18.20" viewBox="990.90 545.30 18.20 18.20"><path d="M1006.34 552.58L1007.97 552.93L1007.97 555.87L1006.34 556.22L1005.77 557.60L1006.67 558.99L1004.59 561.07L1003.20 560.17L1001.82 560.74L1001.47 562.37L998.53 562.37L998.18 560.74L996.80 560.17L995.41 561.07L993.33 558.99L994.23 557.60L993.66 556.22L992.03 555.87L992.03 552.93L993.66 552.58L994.23 551.20L993.33 549.81L995.41 547.73L996.80 548.63L998.18 548.06L998.53 546.43L1001.47 546.43L1001.82 548.06L1003.20 548.63L1004.59 547.73L1006.67 549.81L1005.77 551.20Z" fill="#c2d2f4" stroke="#c2d2f4" stroke-width="0.97" stroke-linejoin="round"/><circle cx="1000.00" cy="554.40" r="6.60" fill="#c2d2f4"/><circle cx="1000.00" cy="554.40" r="2.90" fill="#0b1d55"/></svg><div class="circ" style="left:1005px;top:272.4px;width:29px;height:29px;background:#e3e3e3;box-shadow:0 1px 3px rgba(0,0,0,.4)"></div><div class="circ" style="left:1010.3px;top:280.5px;width:4px;height:4px;background:#13275e"></div><div class="circ" style="left:1015.8px;top:280.5px;width:4px;height:4px;background:#13275e"></div><div class="circ" style="left:1010.3px;top:286.0px;width:4px;height:4px;background:#13275e"></div><div class="circ" style="left:1015.8px;top:286.0px;width:4px;height:4px;background:#13275e"></div></div></div></body></html>
